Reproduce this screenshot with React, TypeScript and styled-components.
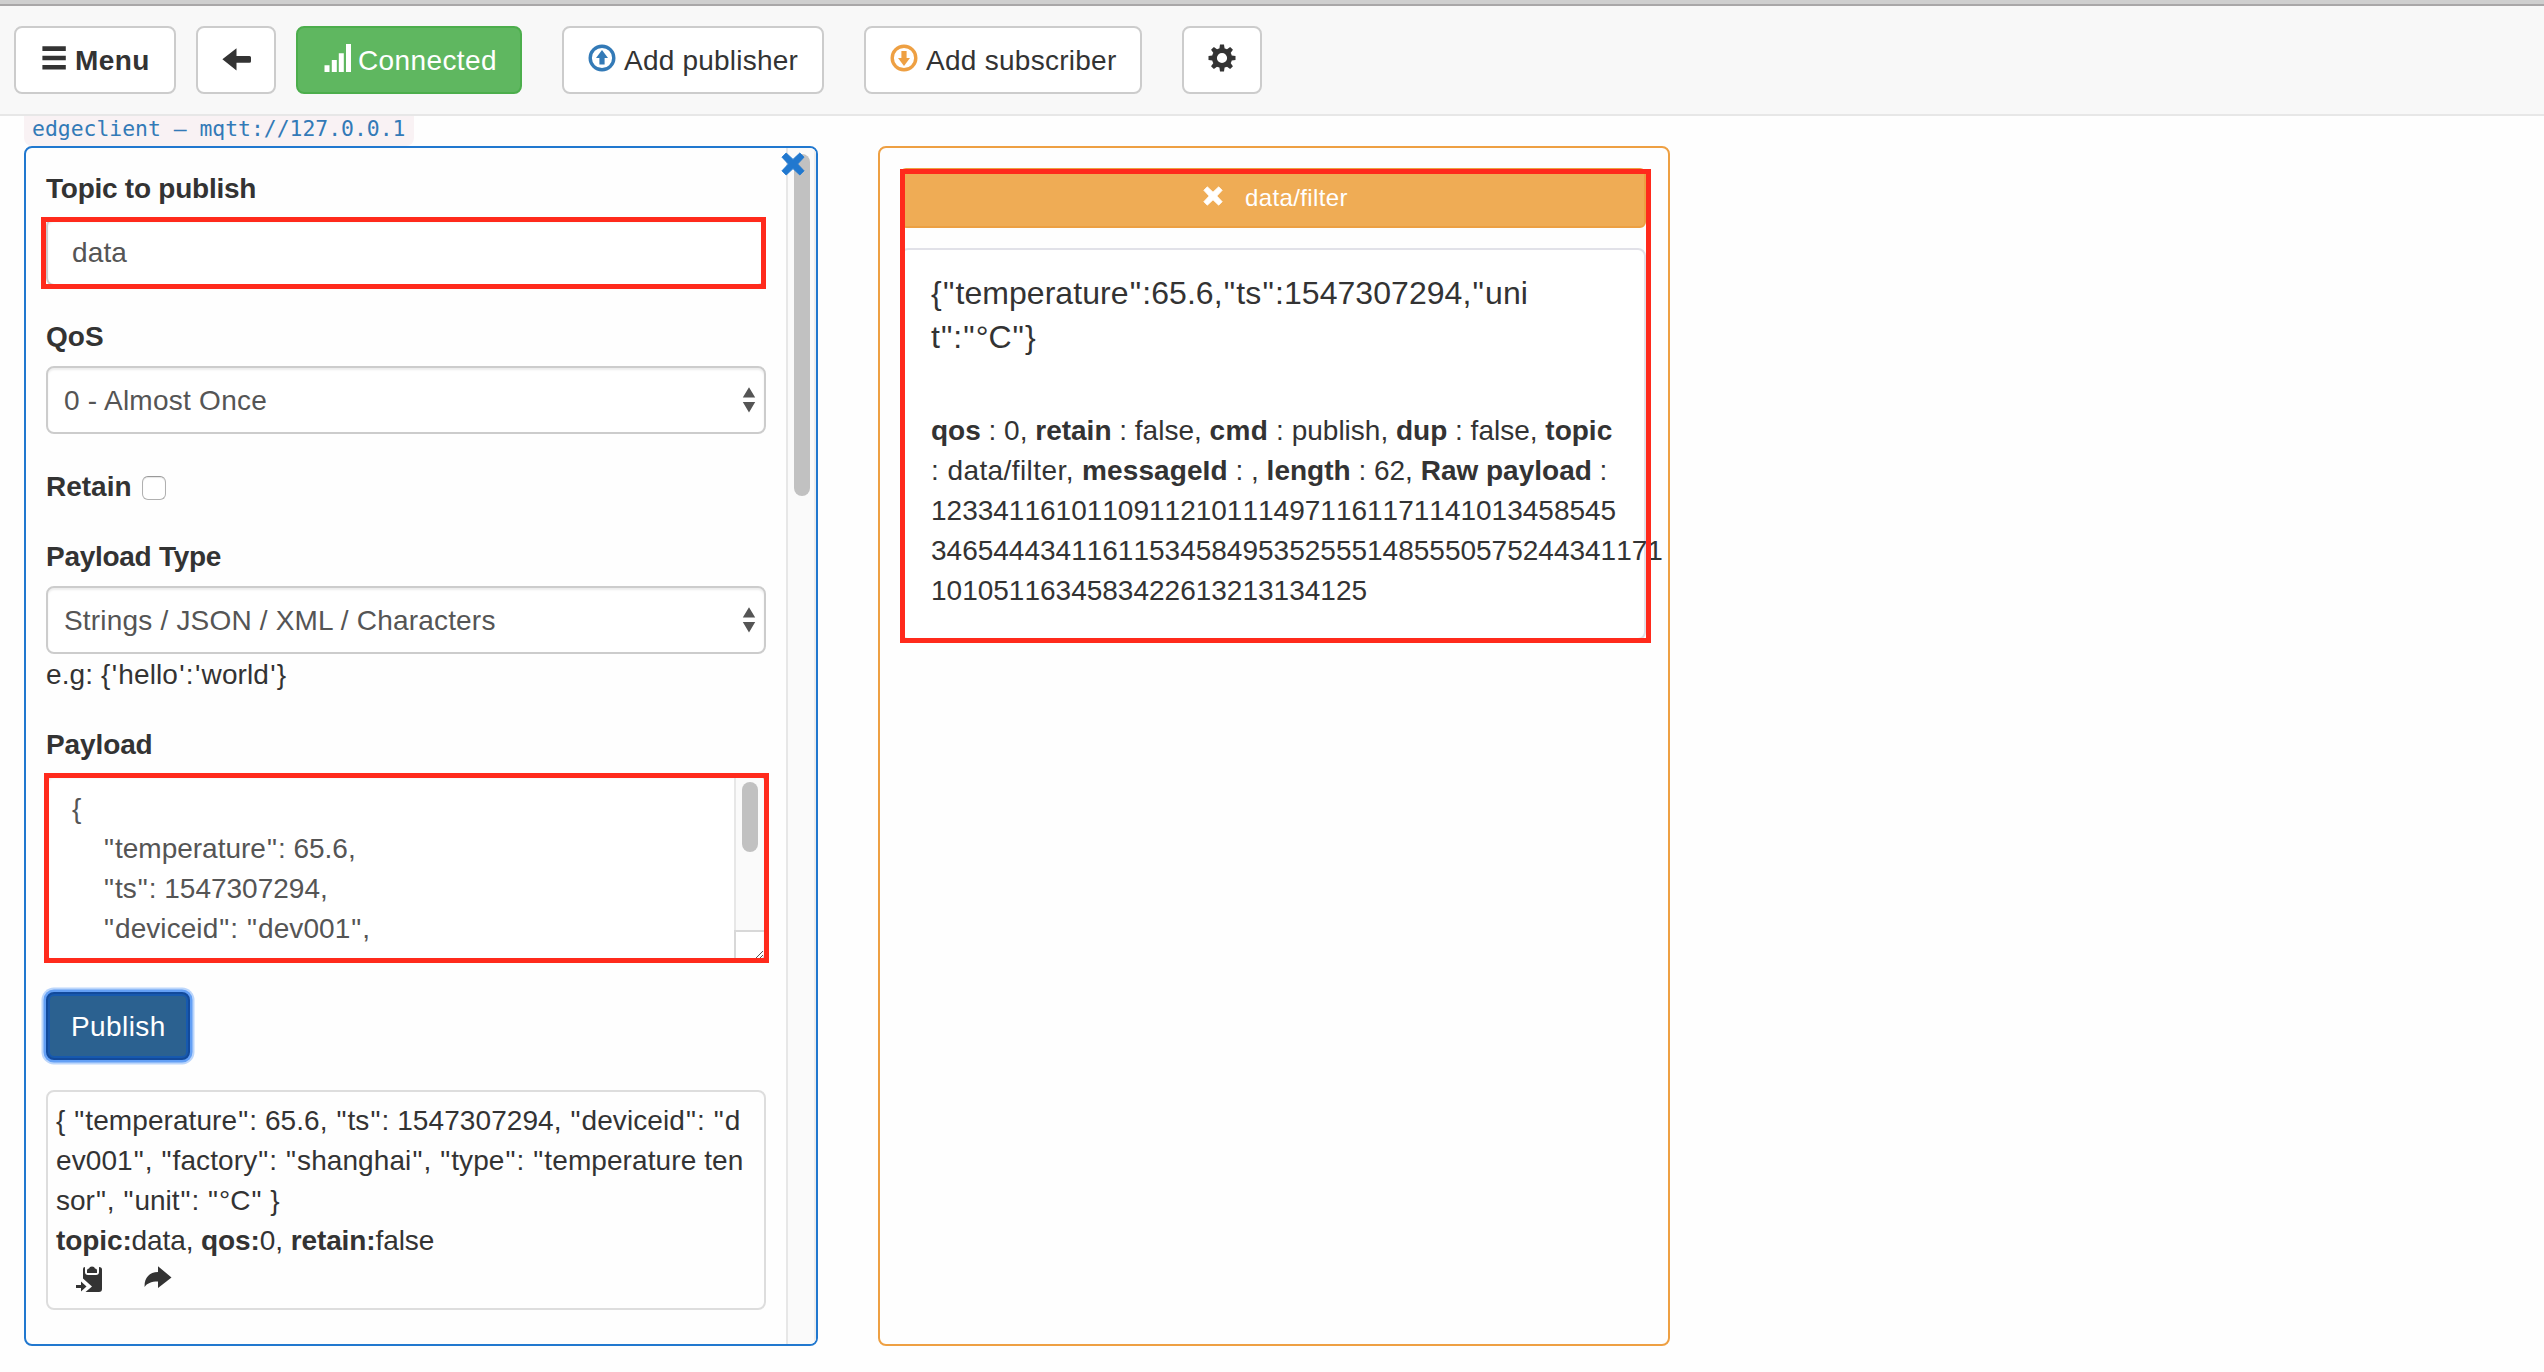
import React from 'react';
import styled, { createGlobalStyle, css } from 'styled-components';

const GlobalStyle = createGlobalStyle`
  * { box-sizing: border-box; }
  html, body { margin: 0; padding: 0; background: #fefefe; }
  body {
    font-family: "Liberation Sans", Arial, sans-serif;
    font-size: 28px;
    line-height: 42px;
    color: #333;
    overflow: hidden;
  }
`;

const Page = styled.div`
  width: 2544px;
  height: 1372px;
  display: flex;
  flex-direction: column;
  overflow: hidden;
`;

const WindowEdge = styled.div`
  height: 6px;
  flex: none;
  background: #cfcfcf;
  border-bottom: 2px solid #a9a7a8;
`;

const Navbar = styled.header`
  height: 110px;
  flex: none;
  display: flex;
  align-items: flex-start;
  padding: 20px 14px 0;
  background: #f8f8f8;
  border-bottom: 2px solid #e7e7e7;
`;

const Spaced = css<{ $spacing?: number }>`
  letter-spacing: ${(p) => p.$spacing ?? 0}px;
`;

const Text = styled.span<{ $spacing?: number }>`
  ${Spaced}
  white-space: pre;
`;

const Strong = styled.b<{ $spacing?: number }>`
  ${Spaced}
`;

const QuoteMark = styled.span<{ $single: boolean }>`
  margin: 0 ${(p) => (p.$single ? 0.043 : 0.036)}em;
`;

const NavButton = styled.button<{ $width: number; $gap?: number; $active?: boolean; $bold?: boolean }>`
  width: ${(p) => p.$width}px;
  height: 68px;
  flex: none;
  margin: 0 ${(p) => p.$gap ?? 0}px 0 0;
  padding: 12px 24px;
  display: flex;
  align-items: flex-start;
  font: inherit;
  font-weight: ${(p) => (p.$bold ? 700 : 400)};
  color: ${(p) => (p.$active ? '#fff' : '#333')};
  background: ${(p) => (p.$active ? '#5fb760' : '#fff')};
  border: 2px solid ${(p) => (p.$active ? '#4cae4c' : '#ccc')};
  border-radius: 8px;
`;

const Glyph = styled.svg<{ $mr?: number }>`
  width: 28px;
  height: 28px;
  flex: none;
  margin: 4px ${(p) => p.$mr ?? 0}px 0 0;
  display: block;
  overflow: visible;
`;

const Main = styled.main`
  flex: 1;
  display: flex;
  flex-direction: column;
  align-items: flex-start;
  padding-left: 24px;
`;

const ClientTag = styled.code`
  height: 30px;
  width: 390px;
  padding: 0 8px;
  background: #f9f2f4;
  border-radius: 0 0 8px 8px;
  color: #337ab7;
  font-family: "DejaVu Sans Mono", monospace;
  font-size: 21.4px;
  line-height: 26px;
  white-space: pre;
`;

const Columns = styled.div`
  display: flex;
  gap: 60px;
`;

const Panel = styled.section<{ $width: number; $color: string }>`
  position: relative;
  width: ${(p) => p.$width}px;
  height: 1200px;
  display: flex;
  background: #fefefe;
  border: 2px solid ${(p) => p.$color};
  border-radius: 8px;
  overflow: hidden;
`;

const Form = styled.div`
  width: 760px;
  padding: 20px 20px 0;
  display: flex;
  flex-direction: column;
`;

const ScrollTrack = styled.div`
  flex: 1;
  display: flex;
  padding: 6px 0 0 6px;
  background: #fafafa;
  border-left: 2px solid #e7e7e7;
  border-right: 2px solid #ededed;
`;

const ScrollThumb = styled.div<{ $height: number }>`
  width: 16px;
  height: ${(p) => p.$height}px;
  border-radius: 8px;
  background: #c1c1c1;
`;

const CloseMark = styled.svg`
  position: absolute;
  top: 4px;
  right: 11px;
  width: 24px;
  height: 24px;
`;

const Label = styled.label<{ $spacing?: number }>`
  ${Spaced}
  height: 40px;
  margin-bottom: 10px;
  font-weight: 700;
`;

const Field = styled.div<{ $gap?: number }>`
  position: relative;
  margin-bottom: ${(p) => p.$gap ?? 30}px;
`;

const control = css`
  width: 720px;
  color: #555;
  background: #fff;
  border: 2px solid #ccc;
  border-radius: 8px;
  box-shadow: inset 0 2px 2px rgba(0, 0, 0, 0.075);
`;

const TextInput = styled.div<{ $spacing?: number }>`
  ${control}
  ${Spaced}
  height: 68px;
  padding: 12px 24px;
`;

const SelectBox = styled.div`
  ${control}
  height: 68px;
  padding: 12px 8px 12px 16px;
  display: flex;
  justify-content: space-between;
`;

const Arrows = styled.svg`
  width: 14px;
  height: 28px;
  margin: 6px 0 0;
`;

const Retain = styled.div`
  display: flex;
  height: 40px;
  margin-bottom: 30px;
  font-weight: 700;
`;

const Checkbox = styled.span`
  width: 24px;
  height: 24px;
  margin: 10px 0 0 10px;
  border: 1px solid #b0b0b0;
  border-top-color: #999;
  border-radius: 6px;
  background: #fff;
  box-shadow: inset 0 1px 1px rgba(0, 0, 0, 0.1);
`;

const TextArea = styled.div`
  ${control}
  height: 188px;
  display: flex;
  overflow: hidden;
`;

const AreaText = styled.div`
  flex: 1;
  padding: 12px 24px;
  display: flex;
  flex-direction: column;
`;

const AreaLine = styled.div<{ $indent?: boolean; $spacing?: number }>`
  ${Spaced}
  height: 40px;
  flex: none;
  line-height: 41px;
  padding-left: ${(p) => (p.$indent ? 31 : 0)}px;
  white-space: pre;
`;

const AreaScroll = styled.div`
  width: 30px;
  display: flex;
  flex-direction: column;
`;

const AreaTrack = styled.div`
  height: 154px;
  padding: 6px 0 0 6px;
  background: #fafafa;
  border-left: 2px solid #e7e7e7;
`;

const AreaCorner = styled.div`
  flex: 1;
  display: flex;
  align-items: flex-end;
  justify-content: flex-end;
  border-left: 2px solid #d8d8d8;
  border-top: 2px solid #d8d8d8;
`;

const Mark = styled.div<{ $inset: string }>`
  position: absolute;
  inset: ${(p) => p.$inset};
  border: 5px solid #ff2a1c;
  pointer-events: none;
`;

const PublishButton = styled.button`
  width: 144px;
  height: 68px;
  margin: 0 0 30px;
  padding: 12px 0 12px 23px;
  display: flex;
  font: inherit;
  color: #fff;
  background: #2b6190;
  border: 2px solid #124a9c;
  border-radius: 8px;
  box-shadow: inset 0 0 0 2px #1759ae, 0 0 0 2.5px #64a0f5, 0 0 0 4.5px #bcd6fb;
`;

const Result = styled.div`
  height: 220px;
  padding: 8px;
  border: 2px solid #ddd;
  border-radius: 8px;
`;

const Line = styled.div<{ $spacing?: number }>`
  ${Spaced}
  height: 40px;
  white-space: pre;
`;

const Digits = styled(Line)`
  font-kerning: none;
`;

const Actions = styled.div`
  display: flex;
  gap: 40px;
  padding: 6px 0 0 20px;
`;

const ActionIcon = styled.svg`
  width: 28px;
  height: 28px;
`;

const Messages = styled.div`
  position: relative;
  width: 746px;
  margin: 20px 0 0 20px;
  height: 472px;
`;

const TopicBar = styled.div`
  height: 60px;
  padding: 10px 0 10px 301px;
  display: flex;
  color: #fff;
  font-size: 24px;
  line-height: 36px;
  background: #efac55;
  border: 2px solid #eca043;
  border-radius: 6px;
`;

const TopicMark = styled.svg`
  width: 20px;
  height: 20px;
  margin: 6px 22px 0 0;
`;

const Message = styled.article`
  height: 392px;
  margin-top: 20px;
  padding: 20px 0 0 29px;
  background: #fff;
  border: 2px solid #e1e1e8;
  border-radius: 8px;
`;

const Body = styled.div`
  margin-bottom: 52px;
  font-size: 32px;
  line-height: 46px;
  white-space: pre;
`;

const BodyLine = styled.div<{ $spacing?: number }>`
  ${Spaced}
  height: 44px;
`;

const CROSS = 'M5.200 1 L12 7.400 L18.800 1 L23 5.200 L16.600 12 L23 18.800 L18.800 23 L12 16.600 L5.200 23 L1 18.800 L7.400 12 L1 5.200 Z';

const gearTeeth = [0, 45, 90, 135, 180, 225, 270, 315];

/* Gives quotation marks a little more room on both sides. */
function Quoted({ text }: { text: string }) {
  return (
    <>
      {text.split(/(["'])/).map((part, i) =>
        i % 2 ? (
          <QuoteMark key={i} $single={part === "'"}>
            {part}
          </QuoteMark>
        ) : (
          part
        ),
      )}
    </>
  );
}

function Updown() {
  return (
    <Arrows viewBox="0 0 14 28">
      <path d="M.8 11.5 L7 1.2 L13.2 11.5 Z M.8 16 L13.2 16 L7 26.4 Z" fill="#555" />
    </Arrows>
  );
}

export default function App() {
  return (
    <Page>
      <GlobalStyle />
      <WindowEdge />
      <Navbar>
        <NavButton $width={162} $gap={20} $bold>
          <Glyph $mr={7} viewBox="0 0 28 28">
            <path d="M2.4 2.3h23.4v4.6H2.4z M2.4 11.7h23.4v4.6H2.4z M2.4 21h23.4v4.6H2.4z" fill="#333" />
          </Glyph>
          <Text $spacing={0.43}>Menu</Text>
        </NavButton>
        <NavButton $width={80} $gap={20}>
          <Glyph viewBox="0 0 28 28">
            <path d="M.4 15.3 L14.5 4.3 V12 H27.5 Q29 12 29 13.5 V17.2 Q29 18.700 27.5 18.700 H14.5 V26.4 Z" fill="#333" />
          </Glyph>
        </NavButton>
        <NavButton $width={226} $gap={40} $active>
          <Glyph $mr={8} viewBox="0 0 28 28">
            <path d="M2.5 21.3h5V28h-5z M9.8 16h5v12h-5z M16.8 9.3h5V28h-5z M24 0h5v28h-5z" fill="#fff" />
          </Glyph>
          <Text $spacing={0.38}>Connected</Text>
        </NavButton>
        <NavButton $width={262} $gap={40}>
          <Glyph $mr={8} viewBox="0 0 28 28">
            <circle cx="14" cy="14" r="11.8" fill="none" stroke="#337ab7" strokeWidth="3.4" />
            <path d="M14 6 L20 14 H16.6 V20.6 H11.4 V14 H8 Z" fill="#337ab7" />
          </Glyph>
          <Text $spacing={0.22}>Add publisher</Text>
        </NavButton>
        <NavButton $width={278} $gap={40}>
          <Glyph $mr={8} viewBox="0 0 28 28">
            <circle cx="14" cy="14" r="11.8" fill="none" stroke="#eea043" strokeWidth="3.4" />
            <path d="M14 22 L20 14 H16.6 V7 H11.4 V14 H8 Z" fill="#eea043" />
          </Glyph>
          <Text $spacing={0.27}>Add subscriber</Text>
        </NavButton>
        <NavButton $width={80}>
          <Glyph viewBox="0 0 28 28">
            <g fill="#333">
              {gearTeeth.map((a) => (
                <path key={a} d="M11.2 6 L12 .5 H16 L16.800 6 Z" transform={`rotate(${a} 14 14)`} />
              ))}
            </g>
            <circle cx="14" cy="14" r="7.600" fill="none" stroke="#333" strokeWidth="5" />
          </Glyph>
        </NavButton>
      </Navbar>
      <Main>
        <ClientTag>edgeclient – mqtt://127.0.0.1</ClientTag>
        <Columns>
          <Panel $width={794} $color="#2178cf">
            <Form>
              <Label $spacing={-0.25}>Topic to publish</Label>
              <Field>
                <TextInput $spacing={0.12}>data</TextInput>
                <Mark $inset="-1px 0 -3px -5px" />
              </Field>
              <Label>QoS</Label>
              <Field $gap={32}>
                <SelectBox>
                  <Text $spacing={0.26}>0 - Almost Once</Text>
                  <Updown />
                </SelectBox>
              </Field>
              <Retain>
                <Text>Retain</Text>
                <Checkbox />
              </Retain>
              <Label $spacing={-0.28}>Payload Type</Label>
              <Field>
                <SelectBox>
                  <Text $spacing={0.19}>Strings / JSON / XML / Characters</Text>
                  <Updown />
                </SelectBox>
                <Line $spacing={0.1}>
                  <Quoted text="e.g: {'hello':'world'}" />
                </Line>
              </Field>
              <Label $spacing={-0.11}>Payload</Label>
              <Field>
                <TextArea>
                  <AreaText>
                    <AreaLine>{'{'}</AreaLine>
                    <AreaLine $indent>
                      <Quoted text={'"temperature": 65.6,'} />
                    </AreaLine>
                    <AreaLine $indent>
                      <Quoted text={'"ts": 1547307294,'} />
                    </AreaLine>
                    <AreaLine $indent $spacing={0.07}>
                      <Quoted text={'"deviceid": "dev001",'} />
                    </AreaLine>
                  </AreaText>
                  <AreaScroll>
                    <AreaTrack>
                      <ScrollThumb $height={70} />
                    </AreaTrack>
                    <AreaCorner>
                      <svg width="10" height="10" viewBox="0 0 10 10">
                        <path d="M1 9 L9 1 M5 9 L9 5" stroke="#555" strokeWidth="1" />
                      </svg>
                    </AreaCorner>
                  </AreaScroll>
                </TextArea>
                <Mark $inset="-1px -3px -1px -2px" />
              </Field>
              <PublishButton>
                <Text $spacing={0.4}>Publish</Text>
              </PublishButton>
              <Result>
                <Line $spacing={0.08}>
                  <Quoted text={'{ "temperature": 65.6, "ts": 1547307294, "deviceid": "d'} />
                </Line>
                <Line $spacing={0.09}>
                  <Quoted text={'ev001", "factory": "shanghai", "type": "temperature ten'} />
                </Line>
                <Line>
                  <Quoted text={'sor", "unit": "°C" }'} />
                </Line>
                <Line $spacing={-0.1}>
                  <b>topic:</b>data, <b>qos:</b>0, <b>retain:</b>false
                </Line>
                <Actions>
                  <ActionIcon viewBox="0 0 28 28">
                    <path d="M7 3 Q7 1 9 1 V6 Q9 9 12 9 H20 Q23 9 23 6 V1 Q26 1 26 3.5 V23 Q26 26 23 26 H9.5 L16 20.5 L7 12.5 Z" fill="#333" />
                    <path d="M11 4.5 Q11 2.5 13 2.5 Q13.5 .4 16 .4 Q18.500 .4 19 2.500 Q21 2.5 21 4.500 V7 H11 Z" fill="#333" />
                    <path d="M0 19 H5 V15.600 L10.500 20.500 L5 25.500 V22 H0 Z" fill="#333" />
                  </ActionIcon>
                  <ActionIcon viewBox="0 0 28 28">
                    <path d="M14 .2 L27.500 11.500 L14 22 V15.600 C7 15.600 3 17.500 .6 21 C.2 12 5 6.200 14 6 Z" fill="#333" />
                  </ActionIcon>
                </Actions>
              </Result>
            </Form>
            <ScrollTrack>
              <ScrollThumb $height={342} />
            </ScrollTrack>
            <CloseMark viewBox="0 0 24 24">
              <path d={CROSS} fill="#2178cf" stroke="#2178cf" strokeLinejoin="round" />
            </CloseMark>
          </Panel>
          <Panel $width={792} $color="#eea043">
            <Messages>
              <TopicBar>
                <TopicMark viewBox="0 0 24 24">
                  <path d={CROSS} fill="#fff" stroke="#fff" strokeLinejoin="round" />
                </TopicMark>
                <Text $spacing={0.37}>data/filter</Text>
              </TopicBar>
              <Message>
                <Body>
                  <BodyLine $spacing={0.05}>
                    <Quoted text={'{"temperature":65.6,"ts":1547307294,"uni'} />
                  </BodyLine>
                  <BodyLine $spacing={-0.1}>
                    <Quoted text={'t":"°C"}'} />
                  </BodyLine>
                </Body>
                <Line>
                  <b>qos</b> : 0, <b>retain</b> : false, <Strong $spacing={0.4}>cmd</Strong> : publish, <b>dup</b> : false, <b>topic</b>
                </Line>
                <Line>
                  <Text $spacing={0.42}>: data/filter, </Text>
                  <Strong $spacing={0.1}>messageId</Strong> : , <b>length</b> : 62, <b>Raw payload</b> :
                </Line>
                <Digits>12334116101109112101114971161171141013458545</Digits>
                <Digits>34654443411611534584953525551485550575244341171</Digits>
                <Digits>1010511634583422613213134125</Digits>
              </Message>
              <Mark $inset="1px -5px -3px 0" />
            </Messages>
          </Panel>
        </Columns>
      </Main>
    </Page>
  );
}
